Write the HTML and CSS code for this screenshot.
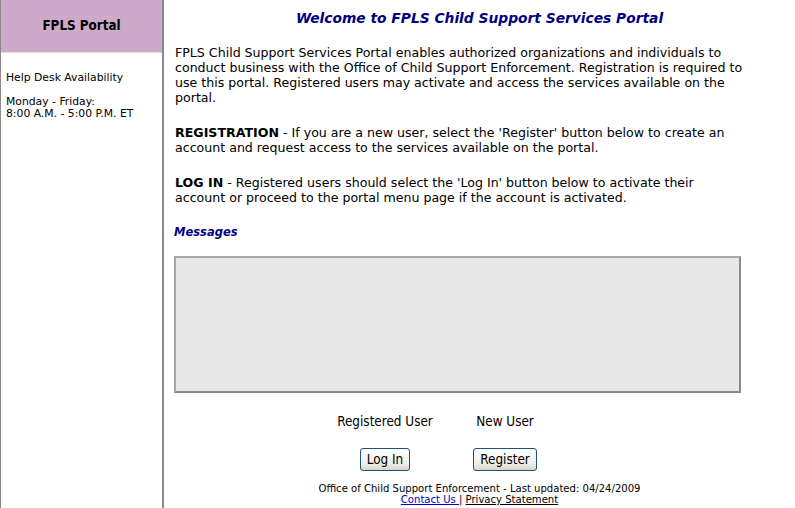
FILE: index.html
```html
<!DOCTYPE html>
<html lang="en">

<head>
    <meta charset="UTF-8">
    <title>FPLS Child Support Services Portal</title>
    <link rel="stylesheet" href="styles.css">
</head>

<body>
    <div class="page">
        <div class="sidebar">
            <div class="side-head">FPLS Portal</div>
            <div class="side-info">
                <p>Help Desk Availability</p>
                <p>Monday - Friday:<br>8:00 A.M. - 5:00 P.M. ET</p>
            </div>
        </div>

        <div class="main">
            <h1>Welcome to FPLS Child Support Services Portal</h1>

            <p>FPLS Child Support Services Portal enables authorized organizations and individuals to
                conduct business with the Office of Child Support Enforcement. Registration is required to
                use this portal. Registered users may activate and access the services available on the
                portal.</p>

            <p><b>REGISTRATION</b> - If you are a new user, select the 'Register' button below to create an
                account and request access to the services available on the portal.</p>

            <p><b>LOG IN</b> - Registered users should select the 'Log In' button below to activate their
                account or proceed to the portal menu page if the account is activated.</p>

            <h2>Messages</h2>
            <div class="messages"></div>

            <div class="actions">
                <span>Registered User</span>
                <span>New User</span>
                <button type="button">Log In</button>
                <button type="button">Register</button>
            </div>

            <div class="footer">
                Office of Child Support Enforcement - Last updated: 04/24/2009<br>
                <a href="#">Contact Us </a> | <a href="#" class="plain">Privacy Statement</a>
            </div>
        </div>
    </div>
</body>

</html>
```

FILE: styles.css
```css
body {
    margin: 0;
    font-family: "DejaVu Sans", sans-serif;
    font-size: 12px;
    color: #000;
    background: #fff;
}

.page {
    display: flex;
    height: 508px;
}

.sidebar {
    width: 161px;
    flex-shrink: 0;
    border-left: 1px solid #8a8a8a;
    border-right: 2px solid #8a8a8a;
}

.side-head {
    height: 52px;
    line-height: 52px;
    background-color: #cdaac9;
    border-bottom: 1px solid #ead8e8;
    text-align: center;
    font-family: "DejaVu Sans Condensed", "DejaVu Sans", sans-serif;
    font-weight: bold;
    font-size: 13.3px;
}

.side-info {
    padding: 19px 0 0 5px;
    font-size: 10.8px;
    line-height: 12px;
}

.side-info p {
    margin: 0 0 12px;
}

.main {
    flex: 1;
    min-width: 0;
}

h1 {
    margin: 10px 0 19px;
    text-align: center;
    font-size: 13.8px;
    line-height: 16px;
    font-style: italic;
    color: #000080;
}

.main p {
    margin: 0 48px 20px 11px;
    font-size: 12.6px;
    line-height: 15px;
}

h2 {
    margin: 20px 48px 16px 10px;
    font-size: 11.5px;
    line-height: 15px;
    font-style: italic;
    color: #000080;
}

.messages {
    height: 133px;
    margin: 0 54px 0 10px;
    background-color: #e8e8e8;
    border: 2px solid #8a8a8a;
    border-top-color: #a8a8a8;
    border-left-color: #a8a8a8;
}

.actions {
    display: grid;
    grid-template-columns: 120px 120px;
    justify-items: center;
    align-items: center;
    row-gap: 19px;
    margin: 21px 0 0 161px;
    width: 240px;
    font-family: "DejaVu Sans Condensed", "DejaVu Sans", sans-serif;
    font-size: 13.4px;
    line-height: 15px;
}

button {
    height: 23px;
    padding: 0 6px;
    font-family: "DejaVu Sans Condensed", "DejaVu Sans", sans-serif;
    font-size: 13.4px;
    border: 1px solid #1c5180;
    border-radius: 3px;
    background: linear-gradient(#ffffff, #f0efe8 70%, #d8d5c8);
    cursor: pointer;
}

.footer {
    margin-top: 12px;
    text-align: center;
    font-family: "DejaVu Sans Condensed", "DejaVu Sans", sans-serif;
    font-size: 11.2px;
    line-height: 11px;
}

.footer a {
    color: #0000cc;
}

.footer a.plain {
    color: #000;
}
```
